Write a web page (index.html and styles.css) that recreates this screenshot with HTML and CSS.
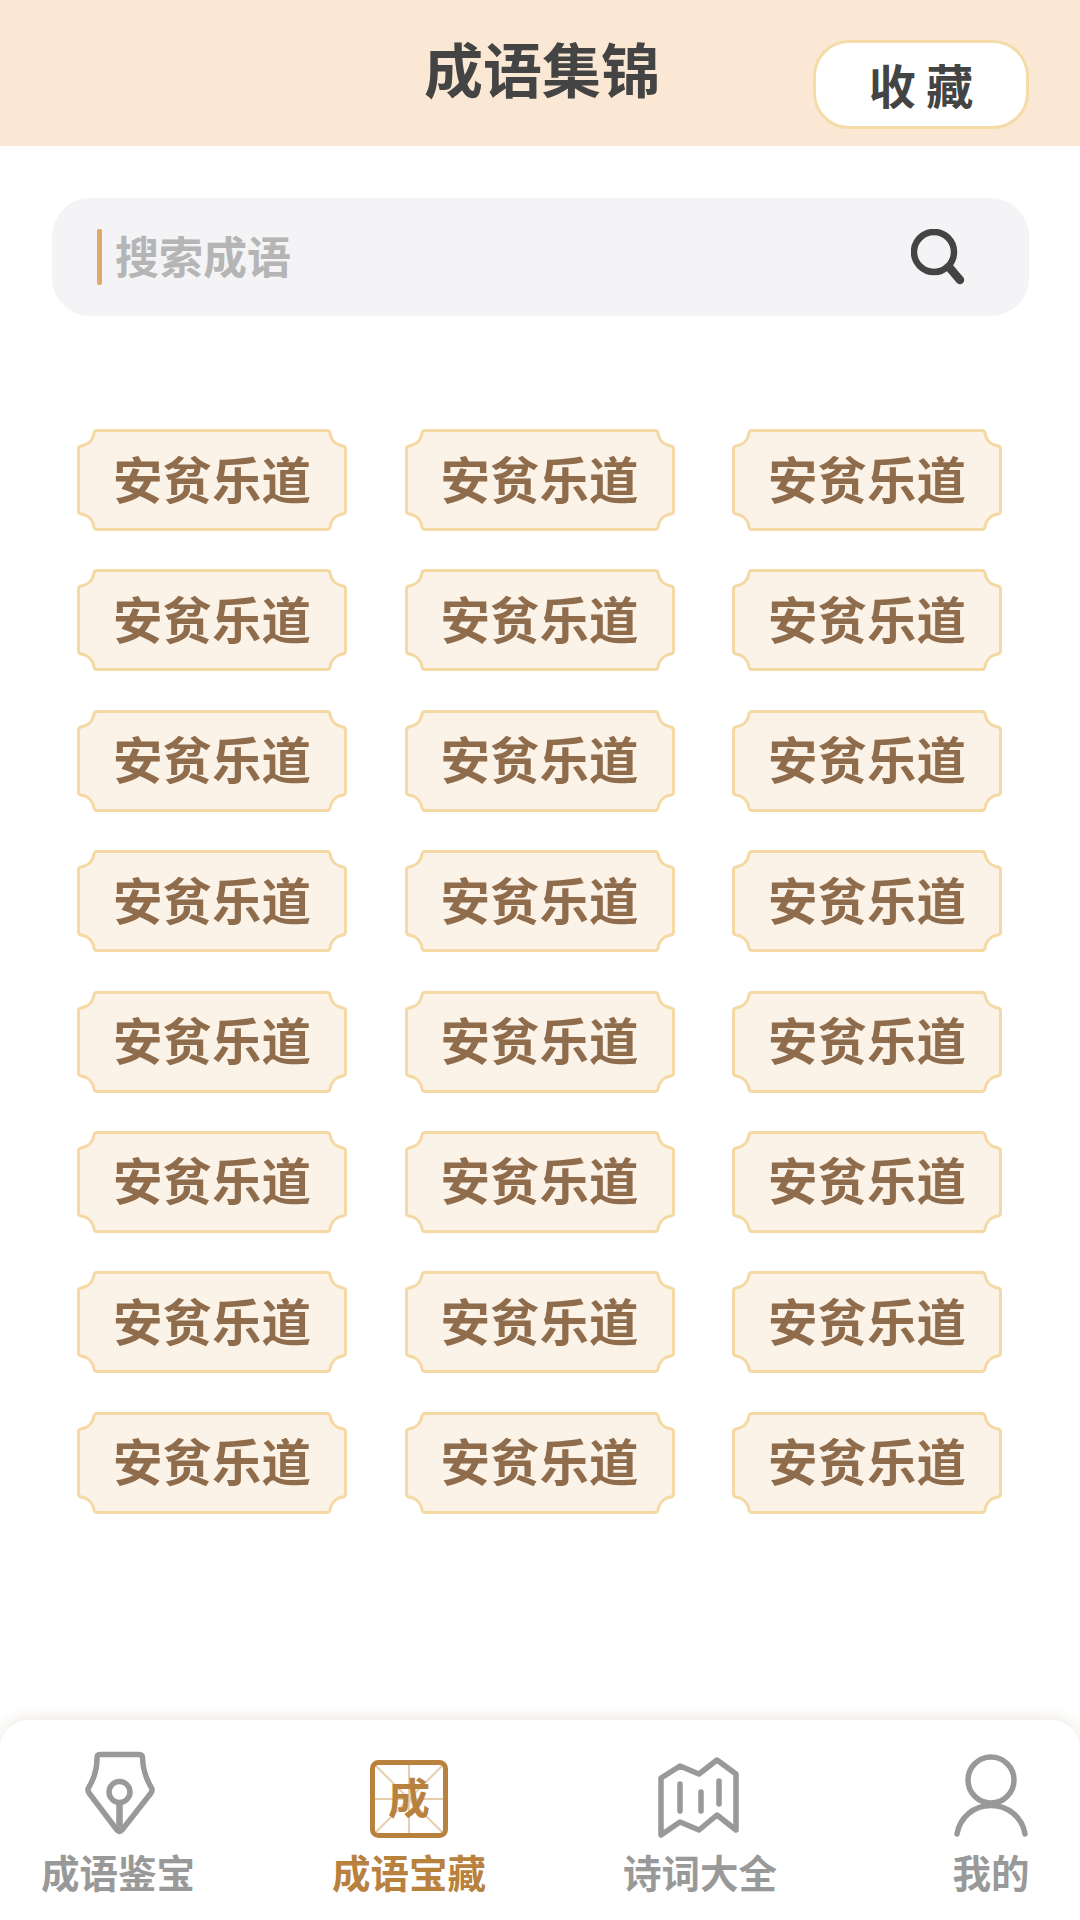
FILE: index.html
```html
<!DOCTYPE html>
<html lang="zh-CN">
<head>
    <meta charset="UTF-8">
    <meta name="viewport" content="width=device-width, initial-scale=1.0">
    <title>成语集锦</title>
    <link rel="stylesheet" href="styles.css">
</head>
<body>
    <header class="top-bar">
        <h1 class="top-title">成语集锦</h1>
        <button class="fav-btn">收 藏</button>
    </header>

    <div class="search-box">
        <span class="search-caret"></span>
        <span class="search-text">搜索成语</span>
        <svg class="search-icon" width="54" height="56" viewBox="0 0 54 56" fill="none" stroke="#444" stroke-linecap="round">
            <circle cx="23" cy="23" r="20" stroke-width="6.500"/>
            <path d="M38 38 L49 51" stroke-width="8.500"/>
        </svg>
    </div>

    <div class="idiom-grid">
        <div class="idiom-chip">安贫乐道</div>
        <div class="idiom-chip">安贫乐道</div>
        <div class="idiom-chip">安贫乐道</div>
        <div class="idiom-chip">安贫乐道</div>
        <div class="idiom-chip">安贫乐道</div>
        <div class="idiom-chip">安贫乐道</div>
        <div class="idiom-chip">安贫乐道</div>
        <div class="idiom-chip">安贫乐道</div>
        <div class="idiom-chip">安贫乐道</div>
        <div class="idiom-chip">安贫乐道</div>
        <div class="idiom-chip">安贫乐道</div>
        <div class="idiom-chip">安贫乐道</div>
        <div class="idiom-chip">安贫乐道</div>
        <div class="idiom-chip">安贫乐道</div>
        <div class="idiom-chip">安贫乐道</div>
        <div class="idiom-chip">安贫乐道</div>
        <div class="idiom-chip">安贫乐道</div>
        <div class="idiom-chip">安贫乐道</div>
        <div class="idiom-chip">安贫乐道</div>
        <div class="idiom-chip">安贫乐道</div>
        <div class="idiom-chip">安贫乐道</div>
        <div class="idiom-chip">安贫乐道</div>
        <div class="idiom-chip">安贫乐道</div>
        <div class="idiom-chip">安贫乐道</div>
    </div>

    <nav class="tab-bar">
        <a class="tab-item">
            <svg class="tab-pen" width="70" height="85" viewBox="0 0 70 85" fill="none" stroke="#999" stroke-width="5.500" stroke-linejoin="round">
                <path d="M15 3.500 H54 Q57.500 3.500 57.500 7 C58 18 60 26 66 36 Q68 39 66 42 L37 79 Q34.500 82 32 79 L4 42 Q2 39 4 36 C10 26 12 18 12 7 Q12 3.500 15 3.500 Z"/>
                <circle cx="34.500" cy="41" r="10.500"/>
                <path d="M34.500 52 V80" stroke-width="6.500"/>
            </svg>
            <span class="tab-label">成语鉴宝</span>
        </a>
        <a class="tab-item active">
            <svg width="78" height="78" viewBox="0 0 78 78" fill="none">
                <path d="M3 3 L75 75 M75 3 L3 75 M39 3 V75 M3 39 H75" stroke="#e6ceae" stroke-width="2"/>
                <rect x="2.500" y="2.500" width="73" height="73" rx="6" stroke="#b8813e" stroke-width="5"/>
                <text x="39" y="54" text-anchor="middle" class="tab-glyph">成</text>
            </svg>
            <span class="tab-label">成语宝藏</span>
        </a>
        <a class="tab-item">
            <svg class="tab-map" width="81" height="81" viewBox="0 0 81 81" fill="none" stroke="#999" stroke-width="5.500" stroke-linecap="round" stroke-linejoin="round">
                <path d="M3 21 L22 9 L41 17 L59 3 L78 17 V73 L59 58 L41 73 L22 65 L3 78 Z"/>
                <path d="M22 27 V54 M43 35 V54 M61 24 V47"/>
            </svg>
            <span class="tab-label">诗词大全</span>
        </a>
        <a class="tab-item">
            <svg width="74" height="84" viewBox="0 0 74 84" fill="none" stroke="#999" stroke-width="5.500" stroke-linecap="round">
                <circle cx="37" cy="26" r="23"/>
                <path d="M3 80 C6 63 20 51.500 37 51.500 S68 63 71 80"/>
            </svg>
            <span class="tab-label">我的</span>
        </a>
    </nav>
</body>
</html>
```

FILE: styles.css
```css
* {
    box-sizing: border-box;
}
body {
    margin: 0;
    width: 1080px;
    height: 1920px;
    display: flex;
    flex-direction: column;
    background-color: #fff;
    font-family: "Noto Sans CJK SC", "Noto Sans", sans-serif;
    overflow: hidden;
}
.top-bar {
    height: 146px;
    padding-right: 51px;
    display: flex;
    justify-content: flex-end;
    align-items: flex-start;
    position: relative;
    background-color: #fbe8d4;
}
.top-title {
    position: absolute;
    left: 4px;
    right: 0;
    top: 28px;
    margin: 0;
    font-size: 59px;
    line-height: 80px;
    font-weight: 700;
    text-align: center;
    color: #444;
}
.fav-btn {
    width: 216px;
    height: 89px;
    margin-top: 40px;
    padding: 0 0 2px;
    border: 3px solid #f5dba8;
    border-radius: 36px;
    background-color: #fff;
    color: #444;
    font-family: inherit;
    font-size: 47px;
    line-height: 1;
    font-weight: 700;
}
.search-box {
    width: 977px;
    height: 118px;
    margin: 52px 0 0 52px;
    padding: 0 64px 0 45px;
    display: flex;
    align-items: center;
    border-radius: 38px;
    background-color: #f4f4f6;
}
.search-caret {
    width: 5px;
    height: 56px;
    border-radius: 2px;
    background-color: #e0a868;
}
.search-text {
    margin: 0 0 4px 13px;
    font-size: 44px;
    font-weight: 700;
    color: #b5b5b5;
    flex: 1;
}
.idiom-grid {
    margin: 113px 0 0 77px;
    display: grid;
    grid-template-columns: repeat(3, 270px);
    grid-auto-rows: 102px;
    column-gap: 57.500px;
    row-gap: 38.400px;
}
.idiom-chip {
    padding-bottom: 6px;
    display: flex;
    align-items: center;
    justify-content: center;
    font-size: 49.500px;
    font-weight: 700;
    color: #8f6c4c;
    background: url("data:image/svg+xml,%3Csvg xmlns='http://www.w3.org/2000/svg' width='270' height='102' viewBox='0 0 270 102'%3E%3Cpath d='M20 1.500 H250 Q252.500 1.500 253 4 C254 11 259 16 266 17 Q268.500 17.500 268.500 20 V82 Q268.500 84.500 266 85 C259 86 254 91 253 98 Q252.500 100.500 250 100.500 H20 Q17.500 100.500 17 98 C16 91 11 86 4 85 Q1.500 84.500 1.500 82 V20 Q1.500 17.500 4 17 C11 16 16 11 17 4 Q17.500 1.500 20 1.500 Z' fill='%23fbf2e8' stroke='%23f5d9a4' stroke-width='3'/%3E%3C/svg%3E") no-repeat center;
}
.tab-bar {
    height: 200px;
    margin-top: auto;
    padding-left: 42px;
    display: grid;
    grid-template-columns: repeat(4, 152px);
    column-gap: 139px;
    border-radius: 28px 28px 0 0;
    background-color: #fff;
    box-shadow: 0 -3px 14px rgba(140, 110, 80, 0.14);
}
.tab-item {
    height: 177px;
    display: flex;
    flex-direction: column;
    align-items: center;
    justify-content: flex-end;
    color: #999;
}
.tab-item.active {
    color: #b8813e;
}
.tab-pen {
    margin: 0 0 2px 3px;
}
.tab-map {
    margin-right: 4px;
}
.tab-glyph {
    font-size: 42px;
    font-weight: 700;
    fill: #b8813e;
}
.tab-label {
    margin-top: 7px;
    height: 52px;
    font-size: 38.500px;
    line-height: 52px;
    font-weight: 700;
    white-space: nowrap;
}
```
